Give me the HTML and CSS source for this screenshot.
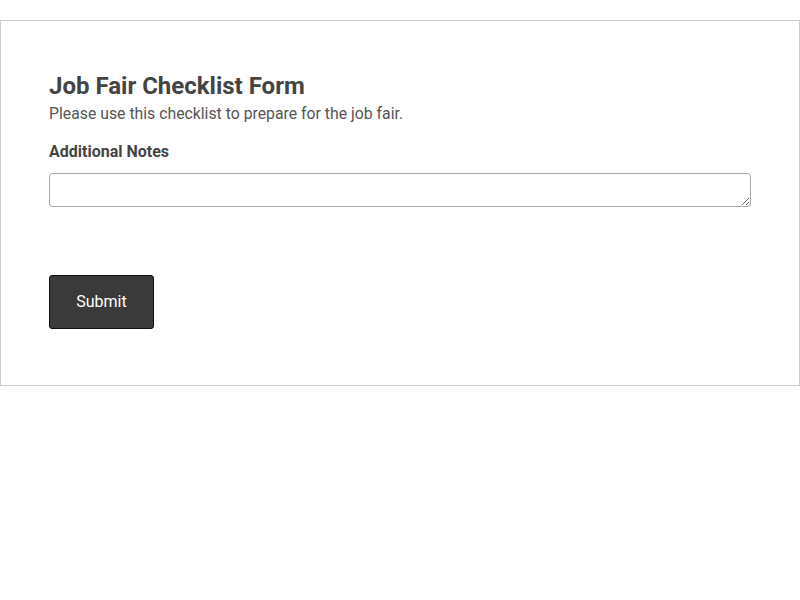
FILE: index.html
```html
<!DOCTYPE html>
<html lang="en">
<head>
    <meta charset="UTF-8">
    <meta name="viewport" content="width=device-width, initial-scale=1.0">
    <title>Job Fair Checklist Form</title>
    <link rel="stylesheet" href="styles.css">
</head>
<body>
    <div class="container">
        <form class="checklist-form">
            <h1>Job Fair Checklist Form</h1>
            <p class="intro">Please use this checklist to prepare for the job fair.</p>

            <div class="field">
                <label for="notes">Additional Notes</label>
                <textarea id="notes" rows="1"></textarea>
            </div>

            <button type="submit" class="btn-submit">Submit</button>
        </form>
    </div>
</body>
</html>
```

FILE: styles.css
```css
* {
    margin: 0;
    padding: 0;
    box-sizing: border-box;
    font-family: Roboto, 'Liberation Sans', sans-serif;
}

body {
    background-color: #fff;
    color: #444;
    padding-top: 20px;
}

.container {
    border: 1px solid #ccc;
    padding: 50px 48px 56px;
}

h1 {
    font-size: 24px;
    font-weight: 700;
    line-height: 30px;
    color: #444;
}

.intro {
    margin-top: 1px;
    font-size: 15.8px;
    line-height: 24px;
    color: #555;
}

.field {
    margin-top: 14px;
    display: flex;
    flex-direction: column;
}

.field label {
    font-size: 16px;
    font-weight: 700;
    line-height: 24px;
    margin-bottom: 9px;
}

.field textarea {
    height: 34px;
    width: 100%;
    border: 1px solid #aaa;
    border-radius: 3px;
    font-size: 16px;
    padding: 6px 8px;
    resize: vertical;
}

.btn-submit {
    margin-top: 68px;
    width: 105px;
    height: 54px;
    padding-bottom: 2px;
    background-color: #3a3a3a;
    color: #fff;
    border: 1px solid #111;
    border-radius: 3px;
    font-size: 16px;
    cursor: pointer;
}
```
